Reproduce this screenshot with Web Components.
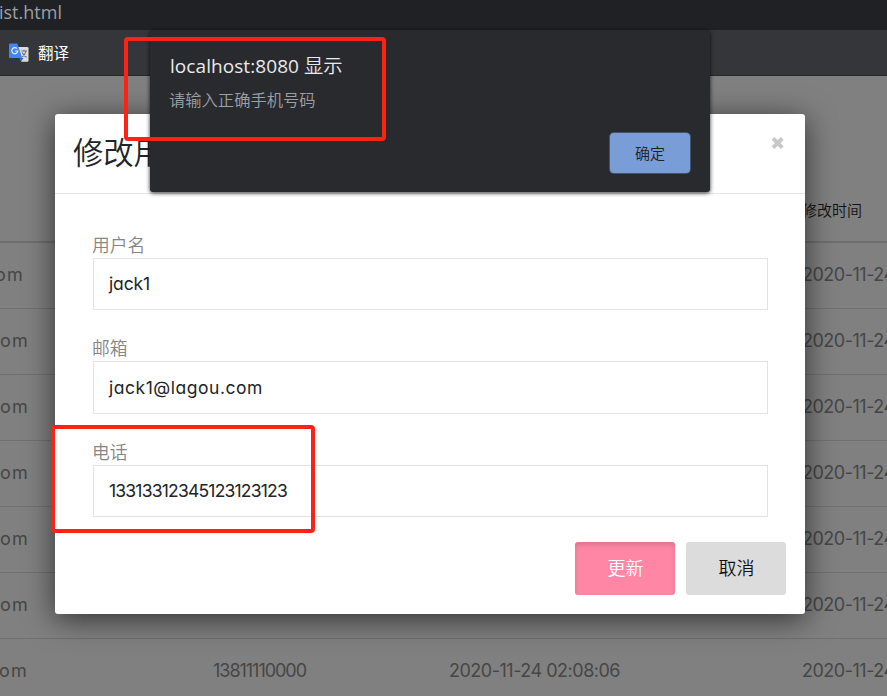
<!DOCTYPE html>
<html lang="zh-CN">
<head>
<meta charset="utf-8">
<title>list.html</title>
<style>
html,body{margin:0;height:100%;overflow:hidden;background:#808080}
body{font-family:Inter,"Noto Sans CJK SC",sans-serif}
</style>
</head>
<body>
<app-screen></app-screen>
<script>
const define = (name, html, setup) => {
  const tpl = document.createElement('template');
  tpl.innerHTML = html;
  customElements.define(name, class extends HTMLElement {
    constructor() {
      super();
      this.attachShadow({mode: 'open'}).append(tpl.content.cloneNode(true));
    }
    connectedCallback() { if (setup) setup(this, this.shadowRoot); }
  });
};

// Text run tracked so that it takes the given width; "w" in px.
define('ui-text', `<style>
:host{display:inline-block;white-space:pre;font-feature-settings:"cv11","ss03";line-height:1.2}
span{display:inline-block}
</style><span><slot></slot></span>`, (el, root) => {
  const w = parseFloat(el.getAttribute('w'));
  const span = root.querySelector('span');
  if (!w) return;
  const n = el.textContent.length;
  span.style.letterSpacing = '0px';
  const ls = (w - span.getBoundingClientRect().width) / n;
  span.style.letterSpacing = ls.toFixed(3) + 'px';
});

define('address-bar', `<style>
:host{display:flex;align-items:center;height:30px;background:#202124;color:#9aa0a6;font:18px/24px "Open Sans","Noto Sans CJK SC",sans-serif;box-sizing:border-box;padding-bottom:5px}
ui-text{margin-left:-1px}
</style><ui-text w="62"><slot></slot></ui-text>`);

define('translate-icon', `<style>:host{display:block;width:20px;height:20px;margin-top:2px}svg{display:block}</style>
<svg width="20" height="20" viewBox="0 0 20 20">
<path d="M8 4h10.2a1.3 1.3 0 0 1 1.3 1.3v12.2a1.3 1.3 0 0 1-1.3 1.3h-6z" fill="#dcdcdc"/>
<path d="M10.5 15h4l-2.5 3.8z" fill="#3367d6"/>
<path d="M12.3 8h5.7M15 6.7V8M17 8c-.5 2.6-2 4.7-4 6M13.3 9.5c.8 2 2.4 3.700 4.300 4.800" fill="none" stroke="#68777d" stroke-width="1.1"/>
<path d="M1.300.5h7l4.900 14.600h-12A1.200 1.200 0 0 1 0 13.900V1.800A1.300 1.300 0 0 1 1.300.5z" fill="#4285f4"/>
<path d="M8 5.600A3 3 0 1 0 8.800 8H6" fill="none" stroke="#e8f0fe" stroke-width="1.200"/>
</svg>`);

define('bookmark-bar', `<style>
:host{display:flex;align-items:center;gap:9px;height:46px;box-sizing:border-box;padding:0 0 1px 9px;background:#35363a;border-bottom:1px solid #29292b;color:#fff;font:15.5px/20px "Noto Sans CJK SC",sans-serif}
</style><translate-icon></translate-icon><span><slot></slot></span>`);

define('table-head', `<style>
:host{display:flex;justify-content:flex-end;align-items:flex-end;height:167px;box-sizing:border-box;border-bottom:2px solid #6e6e6e;padding:0 25px 19px 0;color:#111;font:350 15px/24px "Noto Sans CJK SC",sans-serif}
</style><slot></slot>`);

define('table-row', `<style>
:host{display:grid;grid-template-columns:213px 236px 353px 200px;align-items:center;height:66px;box-sizing:border-box;border-bottom:1px solid #707070;padding-bottom:2px;color:#464646;font-size:18px}
.mail{width:var(--end,29px);display:flex;justify-content:flex-end;white-space:nowrap}
.mail ui-text{flex:none}
</style>
<div class="mail"><ui-text w="29">om</ui-text></div>
<div class="phone"></div><div class="made"></div>
<ui-text w="171">2020-11-24 02:08:06</ui-text>`, (el, root) => {
  root.querySelector('.mail').style.setProperty('--end', (el.getAttribute('end') || 29) + 'px');
  const put = (cls, text, w) => {
    if (!text) return;
    const t = document.createElement('ui-text');
    t.setAttribute('w', w); t.textContent = text;
    root.querySelector(cls).append(t);
  };
  put('.phone', el.getAttribute('phone'), 93);
  put('.made', el.getAttribute('made'), 171);
});

define('form-field', `<style>
:host{display:block;height:103.4px}
label{display:block;margin-left:-1px;color:#868686;font:350 17.800px/26px "Noto Sans CJK SC",sans-serif}
.box{display:flex;align-items:center;box-sizing:border-box;height:52px;margin-top:1px;border:1px solid #e3e3e3;padding:0 15px 1px;color:#212529;font-size:17.500px}
:host([tall]) .box{height:53px;padding-bottom:0}
</style><label></label><div class="box"></div>`, (el, root) => {
  root.querySelector('label').textContent = el.getAttribute('label');
  const t = document.createElement('ui-text');
  t.setAttribute('w', el.getAttribute('w'));
  t.textContent = el.getAttribute('value');
  root.querySelector('.box').append(t);
});

define('modal-button', `<style>
:host{display:flex;align-items:center;justify-content:center;width:100px;height:53px;box-sizing:border-box;padding:0 0 4px 1px;border-radius:3px;background:#dcdcdc;color:#111;font:350 18px/26px "Noto Sans CJK SC",sans-serif}
:host([primary]){background:#ff87a5;color:#fff;box-shadow:inset 0 3px 5px rgba(0,0,0,.14)}
</style><slot></slot>`);

define('edit-modal', `<style>
:host{display:flex;flex-direction:column;box-sizing:border-box;background:#fff;border-radius:3px;box-shadow:0 5px 30px rgba(0,0,0,.62)}
header{display:flex;justify-content:space-between;height:80px;box-sizing:border-box;border-bottom:1px solid #e5e5e5;padding:16px 21px 0 18px}
h2{margin:0;color:#212529;font:350 30.300px/42px "Noto Sans CJK SC",sans-serif}
svg{display:block;margin-top:7px}
main{height:348px;box-sizing:border-box;padding:37px 37px 0 38px}
footer{display:flex;justify-content:flex-end;gap:11px;padding-right:19px}
</style>
<header><h2>修改用户</h2><svg width="13" height="12" viewBox="0 0 13 12"><path d="M2.100 1.400l9.200 9.200M11.300 1.400L2.100 10.600" stroke="#c8c8c8" stroke-width="4"/></svg></header>
<main><slot></slot></main>
<footer><modal-button primary>更新</modal-button><modal-button>取消</modal-button></footer>`);

define('alert-dialog', `<style>
:host{display:flex;flex-direction:column;box-sizing:border-box;background:#292a2d;border-radius:3px;padding:23px 20px 0;box-shadow:0 1px 4px rgba(0,0,0,.8)}
.t{color:#e8eaed;font:19px/24px "Open Sans","Noto Sans CJK SC",sans-serif;height:34px}
.cn{font:350 19.300px/24px "Noto Sans CJK SC",sans-serif}
.m{color:#9aa0a6;margin-left:-1px;font:350 16.300px/24px "Noto Sans CJK SC",sans-serif;height:46px}
button{align-self:flex-end;width:80px;height:40px;box-sizing:border-box;border:0;border-radius:4px;background:#799dd7;color:#202124;font:350 15px/22px "Noto Sans CJK SC",sans-serif;padding:0 0 1px;box-shadow:0 0 0 1px #45536c}
</style>
<div class="t"><ui-text w="134">localhost:8080 </ui-text><span class="cn">显示</span></div>
<div class="m"><slot></slot></div><button>确定</button>`);

define('mark-frame', `<style>:host{display:block;box-sizing:border-box;border:4px solid #fc2314;border-radius:4px}</style>`);

define('app-screen', `<style>
:host{display:block;position:relative;width:887px;height:696px;overflow:hidden;background:#808080}
edit-modal{position:absolute;left:55px;top:114px;width:750px;height:500px}
alert-dialog{position:absolute;left:150px;top:30px;width:560px;height:162px}
mark-frame{position:absolute}
.a{left:124px;top:37px;width:262px;height:104px}
.b{left:51px;top:425px;width:264px;height:108px}
</style>
<address-bar>ist.html</address-bar>
<bookmark-bar>翻译</bookmark-bar>
<table-head>修改时间</table-head>
<table-row end="24"></table-row><table-row></table-row><table-row></table-row>
<table-row></table-row><table-row></table-row><table-row></table-row>
<table-row end="28" phone="13811110000" made="2020-11-24 02:08:06"></table-row>
<edit-modal>
<form-field label="用户名" value="jack1" w="41"></form-field>
<form-field tall label="邮箱" value="jack1@lagou.com" w="154"></form-field>
<form-field label="电话" value="13313312345123123123" w="178"></form-field>
</edit-modal>
<alert-dialog>请输入正确手机号码</alert-dialog>
<mark-frame class="a"></mark-frame><mark-frame class="b"></mark-frame>`);
</script>
</body>
</html>
